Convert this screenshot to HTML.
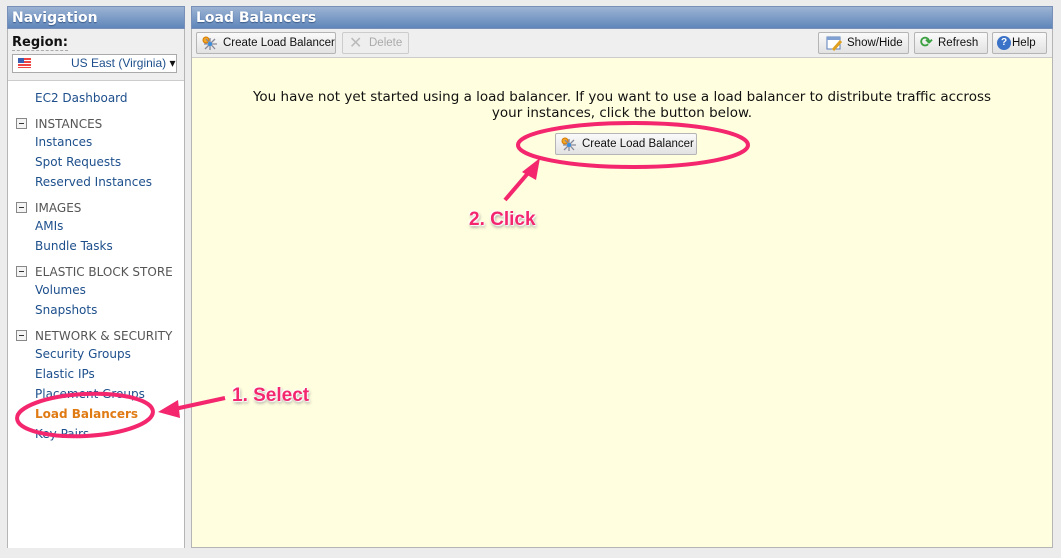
<!DOCTYPE html>
<html><head><style>
body{margin:0;width:1061px;height:558px;background:#ececec;position:relative;overflow:hidden;font-family:"DejaVu Sans",Verdana,sans-serif;}
.abs{position:absolute}
.hdr{background:linear-gradient(#9cb3d3,#5f86ba);color:#fff;font:bold 14px "DejaVu Sans",sans-serif;height:23px;line-height:23px;padding-left:4px;box-sizing:border-box;text-shadow:0 1px 1px #3a5a88;border:1px solid #7890b8}
.nav a{position:absolute;left:35px;font-size:12px;color:#1d4f8c;text-decoration:none}
.sec{position:absolute;left:16px;font-size:12px;color:#555}
.sec i{display:inline-block;width:9px;height:9px;border:1px solid #888;margin-right:8px;position:relative;top:1px;background:#f4f4f4}
.sec i:after{content:"";position:absolute;left:2px;top:4px;width:5px;height:1px;background:#333}
.btn{position:absolute;top:32px;height:22px;border:1px solid #b5b5b5;border-radius:2px;background:linear-gradient(#fafafa,#e2e2e2);font:11.5px "Liberation Sans",Arial,sans-serif;color:#111;line-height:21px;box-sizing:border-box;padding-left:26px;white-space:nowrap}
.ann{font:bold 19px "Liberation Sans",Arial,sans-serif;color:#f3266e;text-shadow:0 0 2px #fff,1px 1px 1px #fff,-1px -1px 1px #fff,1px 2px 3px #888}
</style></head><body>
<div class="abs" style="left:7px;top:6px;width:178px;height:542px;background:#efefef;border:1px solid #b5b5b5;box-sizing:border-box"></div>
<div class="abs hdr" style="left:7px;top:6px;width:178px">Navigation</div>
<div class="abs" style="left:12px;top:35px;font:bold 13px 'DejaVu Sans',sans-serif;color:#111;border-bottom:1px dashed #aaa">Region:</div>
<div class="abs" style="left:12px;top:54px;width:165px;height:19px;background:#fff;border:1px solid #aaa;box-sizing:border-box;font-size:11.5px;color:#1d4f8c;line-height:17px;white-space:nowrap">
<span class="abs" style="left:5px;top:3px;width:13px;height:10px;background:repeating-linear-gradient(#e44 0 2px,#fff 2px 3px)"><span class="abs" style="left:0;top:0;width:6px;height:5px;background:#3b5fb0"></span></span>
<span class="abs" style="left:58px;top:0;font-family:'Liberation Sans',Arial,sans-serif;font-size:12px">US East (Virginia) <span style="color:#111">▾</span></span></div>
<div class="abs" style="left:8px;top:80px;width:176px;height:467px;background:#fff;border-top:1px solid #ccc"></div>
<div class="nav">
<a style="top:91px">EC2 Dashboard</a>
<div class="sec" style="top:117px"><i></i>INSTANCES</div>
<a style="top:135px">Instances</a><a style="top:155px">Spot Requests</a><a style="top:175px">Reserved Instances</a>
<div class="sec" style="top:201px"><i></i>IMAGES</div>
<a style="top:219px">AMIs</a><a style="top:239px">Bundle Tasks</a>
<div class="sec" style="top:265px"><i></i>ELASTIC BLOCK STORE</div>
<a style="top:283px">Volumes</a><a style="top:303px">Snapshots</a>
<div class="sec" style="top:329px"><i></i>NETWORK &amp; SECURITY</div>
<a style="top:347px">Security Groups</a><a style="top:367px">Elastic IPs</a><a style="top:387px">Placement Groups</a>
<a style="top:407px;color:#e07b14;font-weight:bold">Load Balancers</a><a style="top:427px">Key Pairs</a>
</div>
<div class="abs" style="left:191px;top:6px;width:862px;height:542px;background:#fffede;border:1px solid #b5b5b5;box-sizing:border-box"></div>
<div class="abs hdr" style="left:191px;top:6px;width:862px">Load Balancers</div>
<div class="abs" style="left:192px;top:29px;width:860px;height:28px;background:#efefef;border-bottom:1px solid #ccc"></div>
<div class="btn" style="left:196px;width:140px"><svg class="abs" style="left:5px;top:3px" width="16" height="15"><circle cx="4" cy="4" r="3" fill="#f5a623" stroke="#d47b00"/><path d="M8 2v12M2 8h13M3 13l10-10M4 3l9 10" stroke="#889" stroke-width="1.3"/><circle cx="8" cy="8" r="2" fill="#3a8fe0"/></svg>Create Load Balancer</div>
<div class="btn" style="left:342px;width:67px;color:#aaa;border-color:#ccc;background:#eee"><span class="abs" style="left:6px;top:0;color:#bbb;font-size:16px">✕</span>Delete</div>
<div class="btn" style="left:818px;width:91px;padding-left:28px"><svg class="abs" style="left:7px;top:3px" width="17" height="15"><rect x="1" y="1" width="13" height="12" fill="#fff" stroke="#5a7fb8"/><rect x="1" y="1" width="13" height="3" fill="#7fa0d0"/><path d="M7 14l8-9" stroke="#e0a020" stroke-width="3"/></svg>Show/Hide</div>
<div class="btn" style="left:914px;width:74px;padding-left:23px"><span class="abs" style="left:5px;top:-1px;color:#3aa040;font-size:15px;font-weight:bold">⟳</span>Refresh</div>
<div class="btn" style="left:992px;width:55px;padding-left:19px"><span class="abs" style="left:4px;top:3px;width:14px;height:14px;border-radius:50%;background:#3b73c8;color:#fff;font:bold 10px/14px Arial;text-align:center">?</span>Help</div>
<div class="abs" style="left:192px;top:89px;width:860px;text-align:center;font-size:13.5px;color:#111;line-height:16px;white-space:nowrap">You have not yet started using a load balancer. If you want to use a load balancer to distribute traffic accross<br>your instances, click the button below.</div>
<div class="btn" style="left:555px;top:133px;width:142px"><svg class="abs" style="left:5px;top:3px" width="16" height="15"><circle cx="4" cy="4" r="3" fill="#f5a623" stroke="#d47b00"/><path d="M8 2v12M2 8h13M3 13l10-10M4 3l9 10" stroke="#889" stroke-width="1.3"/><circle cx="8" cy="8" r="2" fill="#3a8fe0"/></svg>Create Load Balancer</div>
<svg class="abs" style="left:0;top:0" width="1061" height="558">
<g fill="none" stroke="#f3266e" stroke-width="4">
<ellipse cx="633" cy="145" rx="115" ry="22"/>
<ellipse cx="85" cy="415" rx="68" ry="21" transform="rotate(-3 85 415)"/>
<path d="M505 200L535 165"/>
<path d="M225 398L170 410"/>
</g>
<path d="M540 158L522 172L536 180Z" fill="#f3266e"/>
<path d="M158 412L178 400L180 418Z" fill="#f3266e"/>
</svg>
<div class="abs ann" style="left:469px;top:209px">2. Click</div>
<div class="abs ann" style="left:232px;top:385px">1. Select</div>
</body></html>
